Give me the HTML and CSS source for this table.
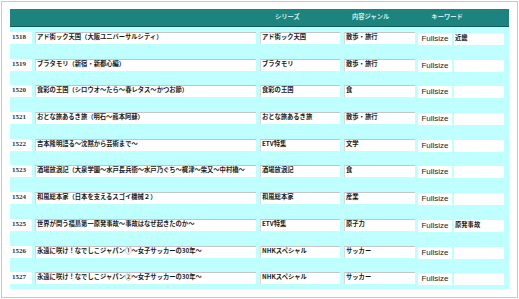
FILE: index.html
```html
<!DOCTYPE html>
<html lang="ja">
<head>
<meta charset="utf-8">
<link rel="stylesheet" href="styles.css">
</head>
<body>
<div class="frame">
  <div class="sheet">
    <div class="head">
      <span class="h-series">シリーズ</span>
      <span class="h-genre">内容ジャンル</span>
      <span class="h-kw">キーワード</span>
    </div>
    <div class="rows">
      <div class="row"><div class="c num">1518</div><div class="c field title">アド街ック天国（大阪ユニバーサルシティ）</div><div class="c field series">アド街ック天国</div><div class="c field genre">散歩・旅行</div><div class="c fs">Fullsize</div><div class="c kw">近畿</div></div>
      <div class="row"><div class="c num">1519</div><div class="c field title">ブラタモリ（新宿・新都心編）</div><div class="c field series">ブラタモリ</div><div class="c field genre">散歩・旅行</div><div class="c fs">Fullsize</div><div class="c kw"></div></div>
      <div class="row"><div class="c num">1520</div><div class="c field title">食彩の王国（シロウオ〜たら〜春レタス〜かつお節）</div><div class="c field series">食彩の王国</div><div class="c field genre">食</div><div class="c fs">Fullsize</div><div class="c kw"></div></div>
      <div class="row"><div class="c num">1521</div><div class="c field title">おとな旅あるき旅（明石〜熊本阿蘇）</div><div class="c field series">おとな旅あるき旅</div><div class="c field genre">散歩・旅行</div><div class="c fs">Fullsize</div><div class="c kw"></div></div>
      <div class="row"><div class="c num">1522</div><div class="c field title">吉本隆明語る〜沈黙から芸術まで〜</div><div class="c field series">ETV特集</div><div class="c field genre">文学</div><div class="c fs">Fullsize</div><div class="c kw"></div></div>
      <div class="row"><div class="c num">1523</div><div class="c field title">酒場放浪記（大泉学園〜水戸長兵衛〜水戸乃ぐち〜梶津〜柴又〜中村橋〜</div><div class="c field series">酒場放浪記</div><div class="c field genre">食</div><div class="c fs">Fullsize</div><div class="c kw"></div></div>
      <div class="row"><div class="c num">1524</div><div class="c field title">和風総本家（日本を支えるスゴイ機械２）</div><div class="c field series">和風総本家</div><div class="c field genre">産業</div><div class="c fs">Fullsize</div><div class="c kw"></div></div>
      <div class="row"><div class="c num">1525</div><div class="c field title">世界が問う福島第一原発事故〜事故はなぜ起きたのか〜</div><div class="c field series">ETV特集</div><div class="c field genre">原子力</div><div class="c fs">Fullsize</div><div class="c kw">原発事故</div></div>
      <div class="row"><div class="c num">1526</div><div class="c field title">永遠に咲け！なでしこジャパン①〜女子サッカーの30年〜</div><div class="c field series">NHKスペシャル</div><div class="c field genre">サッカー</div><div class="c fs">Fullsize</div><div class="c kw"></div></div>
      <div class="row"><div class="c num">1527</div><div class="c field title">永遠に咲け！なでしこジャパン②〜女子サッカーの30年〜</div><div class="c field series">NHKスペシャル</div><div class="c field genre">サッカー</div><div class="c fs">Fullsize</div><div class="c kw"></div></div>
    </div>
  </div>
</div>
</body>
</html>
```
FILE: styles.css
```css
html, body {
  margin: 0;
  padding: 0;
  background: #ffffff;
}
body {
  width: 519px;
  height: 299px;
  overflow: hidden;
}
.frame {
  box-sizing: border-box;
  margin: 1px;
  width: 517px;
  height: 297px;
  border: 1px solid #c9c9c9;
  padding: 7px 7px 7px 8px;
}
.sheet {
  width: 499px;
  height: 280px;
  background: #c0ffff;
  display: flex;
  flex-direction: column;
}
.head {
  height: 17px;
  background: #1c837e;
  border-bottom: 1px solid #0e5e59;
  display: flex;
  align-items: center;
  font-family: "Noto Sans CJK JP", sans-serif;
  font-weight: bold;
  font-size: 6.3px;
  color: #cfeee8;
  line-height: 1;
}
.h-series { margin-left: 265px; }
.h-genre { margin-left: 52px; }
.h-kw { margin-left: 42px; }
.rows {
  display: flex;
  flex-direction: column;
  gap: 13.7px;
  padding-top: 5px;
}
.row {
  display: flex;
  height: 13px;
  align-items: flex-start;
}
.c {
  box-sizing: border-box;
  height: 12px;
  background: #ffffff;
  font-family: "Noto Sans CJK JP", sans-serif;
  font-size: 6.3px;
  font-weight: bold;
  line-height: 8px;
  color: #1a1a1a;
  white-space: nowrap;
  overflow: hidden;
}
.field {
  border-top: 1px solid #c4c4c4;
  border-left: 1px solid #dadada;
  padding: 0 0 0 1px;
}
.num {
  width: 22px;
  font-family: "Liberation Serif", serif;
  font-weight: bold;
  font-size: 7px;
  color: #333;
  padding: 1px 0 0 2px;
}
.title { width: 221px; margin-left: 3px; }
.series { width: 80px; margin-left: 4px; }
.genre { width: 71px; margin-left: 4px; }
.fs {
  width: 34px;
  margin-left: 3px;
  margin-top: 1px;
  font-family: "Liberation Sans", sans-serif;
  font-size: 8px;
  font-weight: normal;
  line-height: 12px;
  text-align: center;
  color: #222;
}
.kw {
  width: 50px;
  margin-left: 2px;
  margin-top: 1px;
  padding: 1px 0 0 1px;
}
```
